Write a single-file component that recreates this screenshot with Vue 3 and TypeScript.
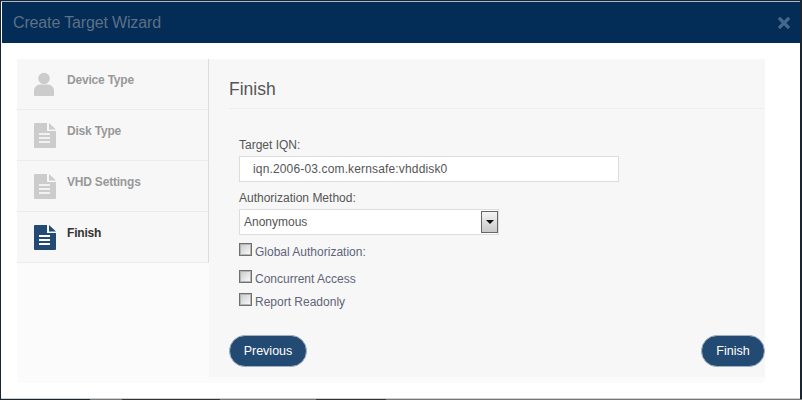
<script setup lang="ts">
interface Step { label: string; icon: 'user' | 'doc'; active?: boolean }
const steps: Step[] = [
  { label: 'Device Type', icon: 'user' },
  { label: 'Disk Type', icon: 'doc' },
  { label: 'VHD Settings', icon: 'doc' },
  { label: 'Finish', icon: 'doc', active: true },
]
const checks = [
  { label: 'Global Authorization:', cls: 'c1' },
  { label: 'Concurrent Access', cls: 'c2' },
  { label: 'Report Readonly', cls: 'c3' },
]
</script>

<template>
  <div class="screen">
    <div class="modal">
      <header class="head">
        <h1>Create Target Wizard</h1>
        <svg class="close" width="12" height="12" viewBox="0 0 12 12"><path d="M2 2l8 8M10 2l-8 8" stroke="#47688c" stroke-width="3.2" stroke-linecap="square" fill="none"/></svg>
      </header>
      <div class="body">
        <div class="card">
          <aside class="side">
            <div v-for="s in steps" :key="s.label" class="step" :class="{ active: s.active }">
              <svg v-if="s.icon === 'user'" class="ico user" width="20" height="24" viewBox="0 0 20 24">
                <circle cx="10" cy="6.500" r="5.800" fill="#cccccc"/>
                <path d="M1 24c-.6 0-1-.4-1-1v-4c0-3.500 2.500-6.500 6-6.500h8c3.500 0 6 3 6 6.500v4c0 .6-.4 1-1 1z" fill="#cccccc"/>
              </svg>
              <svg v-else class="ico" width="22" height="25" viewBox="0 0 22 25">
                <path d="M1 0h12v8h9v16a1 1 0 0 1-1 1H1a1 1 0 0 1-1-1V1a1 1 0 0 1 1-1z" :fill="s.active ? '#234a72' : '#cccccc'"/>
                <path d="M15 0l7 6.500h-7z" :fill="s.active ? '#234a72' : '#cccccc'"/>
                <path d="M5 11h11M5 15h11M5 19h11" :stroke="s.active ? '#ffffff' : '#f1f1f1'" stroke-width="2" fill="none"/>
              </svg>
              <span class="step-label">{{ s.label }}</span>
            </div>
          </aside>
          <main class="pane">
            <h2>Finish</h2>
            <div class="form">
              <label class="lbl">Target IQN:</label>
              <div class="input">iqn.2006-03.com.kernsafe:vhddisk0</div>
              <label class="lbl lbl2">Authorization Method:</label>
              <div class="select">
                <span>Anonymous</span>
                <span class="arrow"><i></i></span>
              </div>
              <div v-for="c in checks" :key="c.label" class="check" :class="c.cls">
                <span class="box"></span>
                <span class="check-text">{{ c.label }}</span>
              </div>
            </div>
            <div class="actions">
              <button type="button" class="btn prev">Previous</button>
              <button type="button" class="btn next">Finish</button>
            </div>
          </main>
        </div>
      </div>
    </div>
    <div class="strip"></div>
  </div>
</template>

<style>
html, body { margin: 0; background: #1a2532; }
</style>

<style scoped>
.screen {
  width: 802px;
  height: 400px;
  box-sizing: border-box;
  padding-top: 2px;
  background: #1a2532;
  font-family: "Liberation Sans", Arial, sans-serif;
  overflow: hidden;
}
.modal {
  height: 397px;
  box-sizing: border-box;
  margin: 0 2px 0 1px;
  display: flex;
  flex-direction: column;
  background: #fff;
  border-bottom: 1px solid #cfcfcf;
  box-shadow: 0 -1px 0 #a9b9cc;
}
.strip {
  height: 1px;
  background: linear-gradient(90deg,
    #1a2532 0 90px, #777 90px 122px, #333 122px 220px, #777 220px 316px,
    #333 316px 386px, #777 386px 802px);
}
.head {
  height: 41px;
  flex: none;
  margin-left: 1px;
  background: #032c57;
  display: flex;
  align-items: center;
  justify-content: space-between;
  padding: 0 5px 0 11px;
}
.head h1 {
  margin: 0;
  font-size: 16px;
  font-weight: 400;
  letter-spacing: -0.15px;
  color: #5d7084;
  line-height: 20px;
}
.close { margin-top: 1px; margin-right: 5px; }
.body { padding: 16px 35px 15px 16px; flex: 1; display: flex; min-height: 0; }
.card {
  flex: 1;
  background: #fbfbfb;
  border-radius: 4px;
  display: flex;
  align-items: flex-start;
}
.side { width: 192px; flex: none; }
.step {
  height: 51px;
  box-sizing: border-box;
  border-right: 1px solid #dcdcdc;
  border-bottom: 1px solid #ececec;
  background: #f7f7f7;
  display: flex;
  align-items: flex-start;
  padding: 13px 0 0 17px;
}
.ico { flex: none; }
.ico.user { margin-right: 2px; }
.step-label {
  margin-left: 11px;
  font-size: 12px;
  line-height: 16px;
  font-weight: 700;
  letter-spacing: -0.2px;
  color: #999;
}
.step.active .step-label { color: #333; }
.pane {
  flex: 1;
  height: 318px;
  box-sizing: border-box;
  background: #f7f7f7;
  padding: 19px 0 0 20px;
  display: flex;
  flex-direction: column;
}
.pane h2 {
  margin: 0;
  height: 30px;
  font-size: 17.5px;
  line-height: 22px;
  font-weight: 400;
  color: #555;
  border-bottom: 1px solid #eeeeee;
}
.form {
  padding: 28px 0 0 10px;
  display: flex;
  flex-direction: column;
  align-items: flex-start;
  font-size: 12px;
  color: #555;
}
.lbl { line-height: 16px; color: #555; }
.lbl2 { margin-top: 8px; }
.input {
  margin-top: 3px;
  width: 380px;
  height: 26px;
  box-sizing: border-box;
  background: #fff;
  border: 1px solid #ddd;
  padding-left: 13px;
  line-height: 24px;
  letter-spacing: 0.15px;
  color: #555;
}
.select {
  margin-top: 3px;
  width: 260px;
  height: 26px;
  box-sizing: border-box;
  background: #fff;
  border: 1px solid #ddd;
  padding: 0 0 0 4px;
  display: flex;
  align-items: center;
  justify-content: space-between;
  line-height: 24px;
}
.arrow {
  width: 17px;
  height: 22px;
  box-sizing: border-box;
  border: 1px solid #666;
  background: linear-gradient(#f4f4f4, #c9c9c9);
  display: flex;
  align-items: center;
  justify-content: center;
}
.arrow i {
  width: 0;
  height: 0;
  border-left: 4px solid transparent;
  border-right: 4px solid transparent;
  border-top: 4px solid #111;
}
.check {
  display: flex;
  align-items: flex-start;
  height: 17px;
  line-height: 16px;
  color: #5f6478;
}
.check-text { margin-top: 1px; }
.c1 { margin-top: 8px; }
.c2 { margin-top: 10px; }
.c3 { margin-top: 6px; }
.box {
  width: 11px;
  height: 11px;
  border: 1px solid #707070;
  background: linear-gradient(135deg, #c8c8c8, #fdfdfd);
  box-shadow: inset 0 0 0 1px #b4b4b4;
  margin-right: 3px;
  flex: none;
}
.actions {
  margin-top: auto;
  padding-bottom: 10px;
  display: flex;
  justify-content: space-between;
}
.btn {
  height: 32px;
  box-sizing: border-box;
  padding: 0;
  border-radius: 16px;
  border: 1px solid #9fb0c2;
  background: #234a72;
  color: #fff;
  font-family: inherit;
  font-size: 12.5px;
  font-weight: 400;
}
.prev { width: 78px; }
.next { width: 64px; }
</style>
